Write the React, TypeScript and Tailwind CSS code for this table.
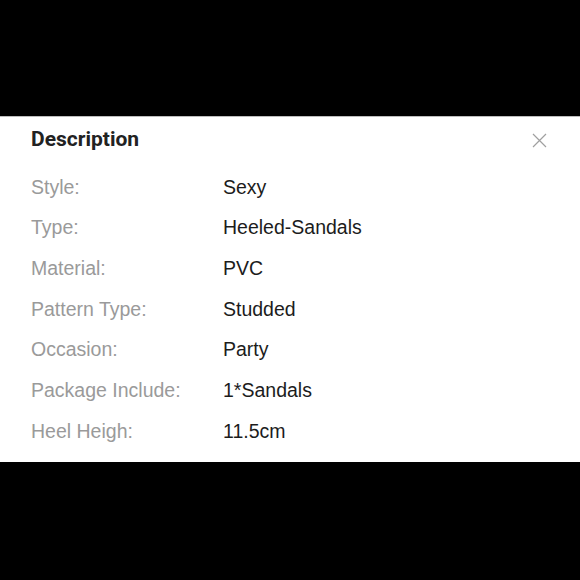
const rows: [string, string][] = [
  ["Style:", "Sexy"],
  ["Type:", "Heeled-Sandals"],
  ["Material:", "PVC"],
  ["Pattern Type:", "Studded"],
  ["Occasion:", "Party"],
  ["Package Include:", "1*Sandals"],
  ["Heel Heigh:", "11.5cm"],
];

export default function App() {
  return (
    <div className="flex h-[580px] w-[580px] flex-col bg-black">
      <div className="h-[116px] shrink-0" />
      <div className="relative shrink-0 border-t border-[#bdbdbd] bg-white pb-[10px] pl-[31px] pt-[8px]">
        <h2 className="h-[28px] font-['Roboto',sans-serif] text-[21px] font-bold leading-[28px] text-[#222]">
          Description
        </h2>
        <button className="absolute right-[33px] top-[16px] h-[15px] w-[15px] text-[#a0a0a0]">
          <svg viewBox="0 0 15 15" className="h-[15px] w-[15px]" fill="none" stroke="currentColor" strokeWidth="1.2">
            <path d="M1 1L14 14M14 1L1 14" />
          </svg>
        </button>
        <div className="mt-[14px] font-['Liberation_Sans',Arial,sans-serif] text-[19.5px]">
          {rows.map(([label, value]) => (
            <div key={label} className="flex h-[40.7px] items-center">
              <span className="w-[192px] text-[#9a9a9a]">{label}</span>
              <span className="text-[#1c1c1c]">{value}</span>
            </div>
          ))}
        </div>
      </div>
      <div className="flex-1" />
    </div>
  );
}
